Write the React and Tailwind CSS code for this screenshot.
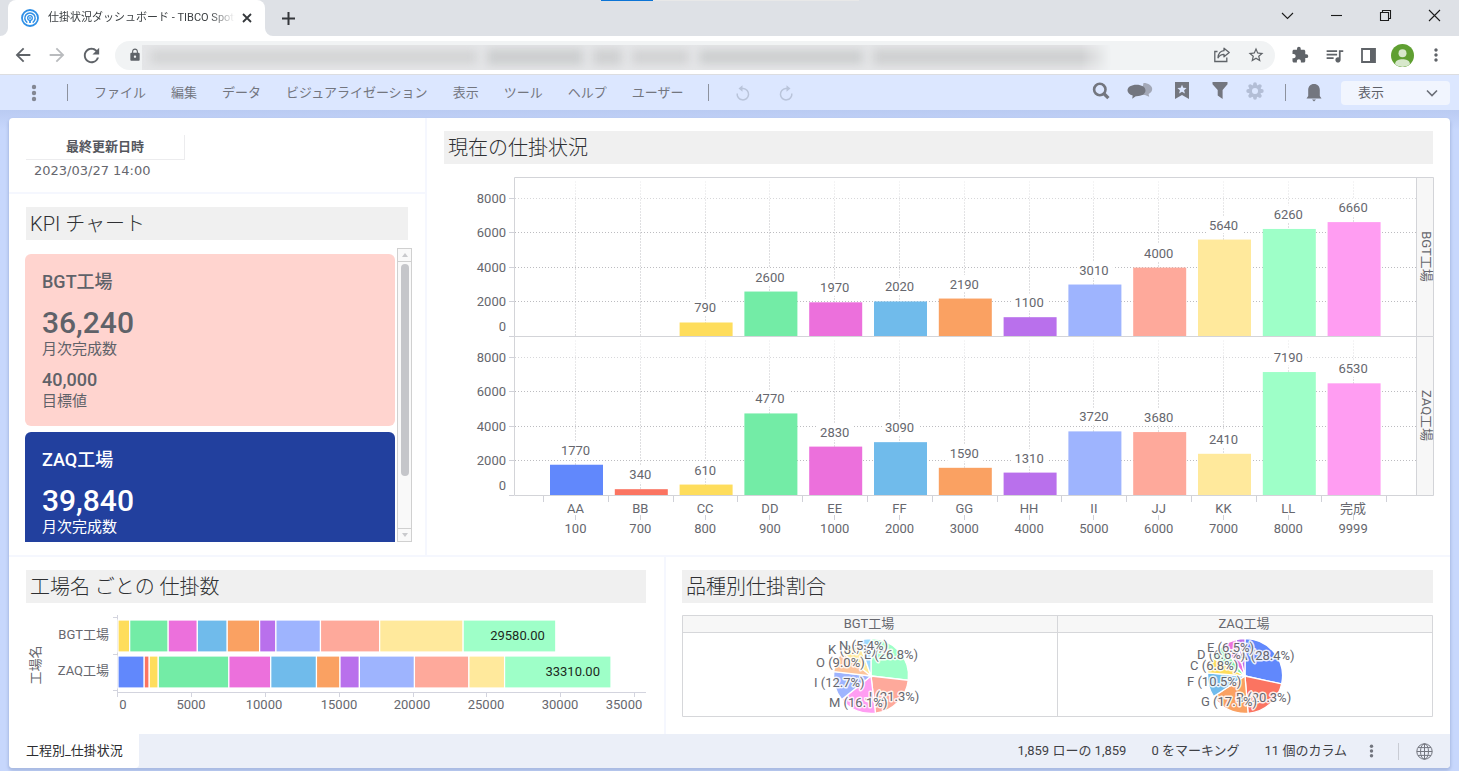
import React from "react";
import {
  MdArrowBack,
  MdArrowForward,
  MdRefresh,
  MdLock,
  MdStarBorder,
  MdExtension,
  MdQueueMusic,
  MdMoreVert,
} from "react-icons/md";

const STEPS = [
  { name: "AA", code: "100", color: "#6188fc", bgt: 0, zaq: 1770 },
  { name: "BB", code: "700", color: "#fb7461", bgt: 0, zaq: 340 },
  { name: "CC", code: "800", color: "#fedd5c", bgt: 790, zaq: 610 },
  { name: "DD", code: "900", color: "#73eca6", bgt: 2600, zaq: 4770 },
  { name: "EE", code: "1000", color: "#ec70dc", bgt: 1970, zaq: 2830 },
  { name: "FF", code: "2000", color: "#70bbeb", bgt: 2020, zaq: 3090 },
  { name: "GG", code: "3000", color: "#faa162", bgt: 2190, zaq: 1590 },
  { name: "HH", code: "4000", color: "#b970ec", bgt: 1100, zaq: 1310 },
  { name: "II", code: "5000", color: "#9eb4fe", bgt: 3010, zaq: 3720 },
  { name: "JJ", code: "6000", color: "#fea99b", bgt: 4000, zaq: 3680 },
  { name: "KK", code: "7000", color: "#ffe99c", bgt: 5640, zaq: 2410 },
  { name: "LL", code: "8000", color: "#9effc8", bgt: 6260, zaq: 7190 },
  { name: "完成", code: "9999", color: "#ff9df2", bgt: 6660, zaq: 6530 },
];

const MENUS = ["ファイル", "編集", "データ", "ビジュアライゼーション", "表示", "ツール", "ヘルプ", "ユーザー"];

function TabStrip() {
  return (
    <header className="relative flex h-9 items-stretch bg-[#dee1e6] pl-2">
      <div className="absolute top-0 left-[601px] flex h-px w-[258px]">
        <div className="w-[52px] bg-[#0b74d6]" />
        <div className="flex-1 bg-[#e8e8e8]" />
      </div>
      <div className="relative flex w-[257px] items-center rounded-t-lg bg-white pr-2 pl-[13px]">
        <svg className="absolute bottom-0 -left-2 size-2" viewBox="0 0 8 8" aria-hidden="true">
          <path d="M8 0v8H0A8 8 0 0 0 8 0Z" fill="#fff" />
        </svg>
        <svg className="absolute -right-2 bottom-0 size-2" viewBox="0 0 8 8" aria-hidden="true">
          <path d="M0 0v8h8A8 8 0 0 1 0 0Z" fill="#fff" />
        </svg>
        <svg className="size-[18px] shrink-0" viewBox="0 0 18 18" fill="none" stroke="#2e8fe6" aria-hidden="true">
          <circle cx="9" cy="9" r="8" strokeWidth="1.8" />
          <path d="M6.3 13.6a5.2 5.2 0 1 1 5.4 0" strokeWidth="1.5" />
          <circle cx="9" cy="9" r="2.300" strokeWidth="1.3" />
          <path d="M9 11v3" strokeWidth="1.8" />
          <circle cx="9" cy="9" r="0.900" fill="#2e8fe6" stroke="none" />
        </svg>
        <div className="ml-[9px] w-[187px] overflow-hidden text-[11px] whitespace-nowrap text-[#3c4043] [mask-image:linear-gradient(to_right,#000_162px,transparent)]">
          仕掛状況ダッシュボード - TIBCO Spotfire
        </div>
        <button type="button" aria-label="タブを閉じる" className="ml-1 flex size-4 items-center justify-center">
          <svg className="size-[10px]" viewBox="0 0 10 10" stroke="#34373b" strokeWidth="1.8" aria-hidden="true">
            <path d="M1 1l8 8M9 1l-8 8" />
          </svg>
        </button>
      </div>
      <button type="button" aria-label="新しいタブ" className="ml-3.5 flex w-[18px] items-center justify-center">
        <svg className="size-[13px]" viewBox="0 0 13 13" stroke="#34373b" strokeWidth="2" aria-hidden="true">
          <path d="M6.5 0v13M0 6.5h13" />
        </svg>
      </button>
      <div className="ml-auto flex h-[30px]">
        {[
          ["タブを検索", "M2 5l5.500 5.500L13 5"],
          ["最小化", "M2 7.5h11"],
          ["元に戻す", "M2.500 4.500h8v8h-8zM4.500 4.500v-2h8v8h-2"],
          ["閉じる", "M2 2l11 11M13 2L2 13"],
        ].map(([label, d]) => (
          <button key={label} type="button" aria-label={label} className="flex w-[49px] items-center justify-center">
            <svg className="size-[15px]" viewBox="0 0 15 15" fill="none" stroke="#1b1b1b" strokeWidth="1.1" aria-hidden="true">
              <path d={d} />
            </svg>
          </button>
        ))}
      </div>
    </header>
  );
}

function AddressBar() {
  return (
    <div className="flex h-[39px] items-center border-b border-[#dcdde0] bg-white pr-1.5 pl-3 text-[#5f6368]">
      <button type="button" aria-label="戻る" className="w-[34px]">
        <MdArrowBack className="size-[22px]" />
      </button>
      <button type="button" aria-label="進む" className="w-[34px] text-[#b9bbbe]">
        <MdArrowForward className="size-[22px]" />
      </button>
      <button type="button" aria-label="再読み込み" className="w-[35px]">
        <MdRefresh className="size-[23px]" />
      </button>
      <div className="flex h-[29px] flex-1 items-center rounded-full bg-[#f1f3f4] pr-2.5 pl-[13px]">
        <MdLock className="size-[14px] shrink-0" />
        <div className="relative mt-1 h-[25px] min-w-0 flex-1 overflow-hidden bg-[#e5e6e8] [mask-image:linear-gradient(to_right,#000_97%,transparent)]">
          <div className="flex size-full items-center gap-2.5 pl-2 blur-[5px]" aria-hidden="true">
            <div className="h-3.5 w-[34%] bg-[#d3d4d5]" />
            <div className="h-4 w-[10%] bg-[#cccecf]" />
            <div className="h-4 w-[3%] bg-[#cfd0d1]" />
            <div className="h-3.5 w-[6%] bg-[#d1d2d3]" />
            <div className="h-3.5 w-[17%] bg-[#cccecf]" />
            <div className="h-4 flex-1 bg-[#cfd0d1]" />
          </div>
          <input
            type="text"
            aria-label="アドレス"
            className="absolute inset-0 size-full bg-transparent px-1 text-[13px] outline-none"
          />
        </div>
        <button type="button" aria-label="共有" className="ml-[102px] flex w-[18px] justify-center">
          <svg className="size-4" viewBox="0 0 16 16" fill="none" stroke="#5f6368" strokeWidth="1.3" aria-hidden="true">
            <path d="M3.500 4.500H.8v10h12v-4" />
            <path d="M10 1.200l5.200 4.300L10 9.800V7.300C7.500 7.300 5.500 8.300 4 10.800 4.300 7 6.500 4 10 3.700Z" strokeLinejoin="round" />
          </svg>
        </button>
        <button type="button" aria-label="ブックマークに追加" className="ml-4 w-[18px]">
          <MdStarBorder className="size-[18px]" />
        </button>
      </div>
      <div className="ml-2 flex items-center">
        <button type="button" aria-label="拡張機能" className="flex w-[34px] justify-center">
          <MdExtension className="size-[18px]" />
        </button>
        <button type="button" aria-label="メディア" className="flex w-[34px] justify-center">
          <MdQueueMusic className="size-[21px]" />
        </button>
        <button type="button" aria-label="サイドパネル" className="flex w-[34px] justify-center">
          <svg className="size-[15px]" viewBox="0 0 15 15" aria-hidden="true">
            <path d="M1 1h13v13H1z" fill="none" stroke="#5f6368" strokeWidth="1.8" />
            <path d="M9 1h5v13H9z" fill="#5f6368" />
          </svg>
        </button>
        <button type="button" aria-label="プロフィール" className="flex w-[34px] justify-center">
          <svg className="size-[23px]" viewBox="0 0 23 23" aria-hidden="true">
            <circle cx="11.500" cy="11.500" r="11.500" fill="#5f9f31" />
            <circle cx="11.500" cy="9.300" r="4" fill="#d7e8cb" />
            <path d="M4 20.200C4.500 16 8 15.300 11.500 15.300S18.500 16 19 20.200A11.500 11.500 0 0 1 4 20.200Z" fill="#d7e8cb" />
          </svg>
        </button>
        <button type="button" aria-label="設定" className="flex w-[34px] justify-center">
          <MdMoreVert className="size-5" />
        </button>
      </div>
    </div>
  );
}

function Dots({ className }) {
  return (
    <svg className={className} viewBox="0 0 6 18" fill="currentColor" aria-hidden="true">
      <circle cx="3" cy="3" r="2.200" />
      <circle cx="3" cy="9" r="2.200" />
      <circle cx="3" cy="15" r="2.200" />
    </svg>
  );
}

function MenuBar() {
  return (
    <nav className="flex h-[35px] items-center bg-[#dce7ff] pr-[9px] pl-[31px] text-[13px] text-[#73767f]">
      <button type="button" aria-label="メニュー">
        <Dots className="h-[18px] w-1.5 text-[#838793]" />
      </button>
      <div className="ml-[30px] h-[17px] w-px bg-[#8d929e]" />
      <div className="ml-[26px] flex gap-[25px]">
        {MENUS.map((m) => (
          <button key={m} type="button" className="whitespace-nowrap">
            {m}
          </button>
        ))}
      </div>
      <div className="ml-[25px] h-[17px] w-px bg-[#8d929e]" />
      <button type="button" aria-label="元に戻す" disabled className="ml-[26px]">
        <svg className="size-4" viewBox="0 0 16 16" fill="none" stroke="#b9c4da" strokeWidth="1.500" aria-hidden="true">
          <path d="M7 3.500h1.200a5.700 5.700 0 1 1-6 5" />
          <path d="M7.500.300v6.400L3.500 3.500Z" fill="#b9c4da" stroke="none" />
        </svg>
      </button>
      <button type="button" aria-label="やり直し" disabled className="ml-[27px]">
        <svg className="size-4" viewBox="0 0 16 16" fill="none" stroke="#b9c4da" strokeWidth="1.500" aria-hidden="true">
          <path d="M9 3.500H7.800a5.700 5.700 0 1 0 6 5" />
          <path d="M8.500.300v6.400l4-3.200Z" fill="#b9c4da" stroke="none" />
        </svg>
      </button>
      <div className="ml-auto flex items-center">
        <div className="flex items-center pb-1">
          <button type="button" aria-label="検索">
            <svg className="size-[18px]" viewBox="0 0 18 18" fill="none" stroke="#73767f" aria-hidden="true">
              <circle cx="7.800" cy="7.500" r="5.700" strokeWidth="2.600" />
              <path d="M11.800 11.500l4.600 4.600" strokeWidth="3.200" />
            </svg>
          </button>
          <button type="button" aria-label="コメント" className="ml-[17px]">
            <svg className="h-[18px] w-[26px]" viewBox="0 0 26 18" aria-hidden="true">
              <path d="M16.500 1c4.800 0 8.700 2.600 8.700 6.100 0 2.200-1.500 3.900-3.600 5l.600 2.700-4.200-1.900h-4Z" fill="#a3a8b7" />
              <path
                d="M9.500 2.800c5 0 9 2.200 9 5.700s-4 5.700-9 5.700h-.700l-3.600 2.500.500-3.100C2.600 12.600.500 10.800.500 8.500c0-3.500 4-5.700 9-5.700Z"
                fill="#73767f"
              />
            </svg>
          </button>
          <button type="button" aria-label="ブックマーク" className="ml-[21px]">
            <svg className="h-[18px] w-4" viewBox="0 0 16 18" aria-hidden="true">
              <path d="M1 0h14v17l-7-4-7 4Z" fill="#73767f" />
              <path d="M8 2.700l1.300 3.100 3.300.300-2.500 2.200.800 3.300L8 9.800l-2.900 1.800.800-3.300L3.400 6.100l3.300-.300Z" fill="#dce7ff" />
            </svg>
          </button>
          <button type="button" aria-label="フィルター" className="ml-[22px]">
            <svg className="h-[18px] w-4" viewBox="0 0 16 18" aria-hidden="true">
              <path d="M.5 0h15v2.300L10.600 8v9L5.700 13.500V8L.5 2.300Z" fill="#73767f" />
            </svg>
          </button>
          <button type="button" aria-label="設定" className="ml-[18px]">
            <svg className="size-[18px]" viewBox="-9 -9 18 18" aria-hidden="true">
              <g stroke="#b3bed6" strokeWidth="3.800" strokeLinecap="round">
                <path d="M0-6.800V-4M0 6.800V4M-6.800 0H-4M6.800 0H4M-4.800-4.800L-3-3M4.800 4.800L3 3M-4.800 4.800L-3 3M4.800-4.800L3-3" />
              </g>
              <circle r="4.600" fill="none" stroke="#b3bed6" strokeWidth="3.400" />
              <circle r="3" fill="#dce7ff" />
            </svg>
          </button>
        </div>
        <div className="ml-[21px] h-[17px] w-px bg-[#8d929e]" />
        <button type="button" aria-label="通知" className="ml-5">
          <svg className="h-[18px] w-4" viewBox="0 0 16 18" fill="#73767f" aria-hidden="true">
            <path d="M8 0c3.600 0 5.800 2.600 5.800 6v6l1.700 2.600H.500L2.200 12V6C2.200 2.600 4.400 0 8 0ZM6 15.600h4L8 17.500Z" />
          </svg>
        </button>
        <div className="relative ml-[19px] h-6 w-[109px]">
          <select
            aria-label="表示モード"
            className="size-full appearance-none rounded bg-[#f1f5fe] pl-[17px] text-[13px] text-[#5d6068]"
          >
            <option>表示</option>
          </select>
          <svg
            className="pointer-events-none absolute top-2 right-3 h-2 w-3"
            viewBox="0 0 12 8"
            fill="none"
            stroke="#6b6e77"
            strokeWidth="1.600"
            aria-hidden="true"
          >
            <path d="M1 1.500l5 5 5-5" />
          </svg>
        </div>
      </div>
    </nav>
  );
}

function PanelTitle({ children }) {
  return (
    <h2 className="h-[33px] bg-[#f0f0f0] pl-1 text-[20px] leading-[35px] font-light whitespace-nowrap text-[#2f3033]">
      {children}
    </h2>
  );
}

function Kpi({ name, value, target, className }) {
  return (
    <article className={`rounded-md px-[17px] py-4 text-[15px] leading-[18px] ${className}`}>
      <h3 className="text-[18px] leading-6 font-medium">{name}</h3>
      <p className="mt-3 text-[30px] leading-[34px] font-medium">{value}</p>
      <p>月次完成数</p>
      <p className="mt-2.5 text-[18px] leading-6 font-medium">{target}</p>
      <p>目標値</p>
    </article>
  );
}

function ScrollArrow({ d }) {
  return (
    <div className="flex h-3.5 items-center justify-center border border-[#d0d0d0] bg-[#f9f9f9]">
      <svg className="h-1 w-1.5" viewBox="0 0 6 4" fill="#c9cacd" aria-hidden="true">
        <path d={d} />
      </svg>
    </div>
  );
}

function KpiPanel() {
  return (
    <section className="flex-1 pt-[13px] pb-[13px]">
      <div className="px-[17px]">
        <PanelTitle>KPI チャート</PanelTitle>
      </div>
      <div className="mt-2 mr-[13px] ml-4 flex h-[294px] gap-0.5">
        <div className="flex flex-1 flex-col gap-1.5 overflow-hidden pt-1.5">
          <Kpi name="BGT工場" value="36,240" target="40,000" className="bg-[#ffd4cf] text-[#5f6269]" />
          <Kpi name="ZAQ工場" value="39,840" target="40,000" className="bg-[#22409e] text-white" />
        </div>
        <div className="flex w-[15px] flex-col">
          <ScrollArrow d="M0 4h6L3 0Z" />
          <div className="flex flex-1 justify-center border-x border-[#d0d0d0] bg-[#f9f9f9] pt-0.5">
            <div className="h-[212px] w-2 rounded-full bg-[#c5c6ca]" />
          </div>
          <ScrollArrow d="M0 0h6L3 4Z" />
        </div>
      </div>
    </section>
  );
}

const UNIT = 34.2 / 2000;
const stepX = (i) => 132.500 + i * 64.8;

function Facet({ title, field, base }) {
  const top = base - 159;
  return (
    <g>
      <g stroke="#bcbcc0" strokeDasharray="1 2">
        {[2000, 4000, 6000, 8000].map((v) => (
          <path key={v} d={`M71 ${Math.floor(base - v * UNIT) - 0.5}H972`} />
        ))}
        {STEPS.map((s, i) => (
          <path key={s.name} d={`M${Math.floor(stepX(i)) - 0.5} ${top + 4}V${base}`} />
        ))}
      </g>
      <rect x="71" y={top + 1} width="901" height="44" fill="url(#fade)" />
      {STEPS.map((s, i) => {
        const v = s[field];
        if (!v) return null;
        const h = v * UNIT;
        const w = String(v).length * 8 + 4;
        return (
          <g key={s.name}>
            <rect x={stepX(i) - w / 2} y={base - h - 24} width={w} height="17" fill="#fff" />
            <rect x={stepX(i) - 26.500} y={base - h - 0.500} width="53" height={h} fill={s.color} />
            <text x={stepX(i) - 1} y={base - h - 10.500} textAnchor="middle">
              {v}
            </text>
          </g>
        );
      })}
      {[0, 2000, 4000, 6000, 8000].map((v) => (
        <g key={v}>
          <path d={v ? `M65 ${Math.floor(base - v * UNIT) - 0.5}h5` : `M65 ${base}h5`} stroke="#d0d1d8" />
          <text x="62" y={v ? base - v * UNIT + 3.500 : base - 6} textAnchor="end">
            {v}
          </text>
        </g>
      ))}
      <rect x="973" y={top} width="17" height="159" fill="#f7f7f7" />
      <path d={`M70.500 ${top}H989.500V${base}H70.500ZM972.500 ${top}V${base}`} fill="none" stroke="#d3d4d8" />
      <text transform={`translate(978 ${top + 79}) rotate(90)`} textAnchor="middle">
        {title}
      </text>
    </g>
  );
}

function StepChart() {
  return (
    <section className="px-[17px] pt-[13px] pb-[13px]">
      <PanelTitle>現在の仕掛状況</PanelTitle>
      <svg
        className="mt-[9px] block w-full overflow-visible text-[13px]"
        viewBox="0 0 989 369"
        fill="#66676e"
        role="img"
        aria-label="現在の仕掛状況"
      >
        <defs>
          <linearGradient id="fade" x1="0" y1="0" x2="0" y2="1">
            <stop offset="0" stopColor="#fff" stopOpacity="0.75" />
            <stop offset="1" stopColor="#fff" stopOpacity="0" />
          </linearGradient>
        </defs>
        <Facet title="BGT工場" field="bgt" base={163.500} />
        <Facet title="ZAQ工場" field="zaq" base={322.500} />
        {STEPS.map((s, i) => (
          <g key={s.name}>
            <path d={`M${Math.floor(stepX(i) - 32) - 0.5} 323v6M${Math.floor(stepX(i)) - 0.5} 342v5`} stroke="#d0d1d8" />
            <text x={stepX(i) - 1} y="340" textAnchor="middle">
              {s.name}
            </text>
            <text x={stepX(i) - 1} y="360" textAnchor="middle">
              {s.code}
            </text>
          </g>
        ))}
        <path d="M942.500 323v6" stroke="#d0d1d8" />
      </svg>
    </section>
  );
}

function StackRow({ label, field, y, total }) {
  let sum = 0;
  const scale = 0.0148;
  return (
    <g>
      {STEPS.slice(0, 12).map((s) => {
        const start = sum;
        sum += s[field];
        return s[field] ? (
          <rect
            key={s.name}
            x={92 + start * scale}
            y={y}
            width={s[field] * scale}
            height="32"
            fill={s.color}
            stroke="#fff"
            strokeWidth="1.200"
          />
        ) : null;
      })}
      <text x="83" y={y + 19} textAnchor="end">
        {label}
      </text>
      <text x={91 + sum * scale - 10} y={y + 20} textAnchor="end" fill="#1d2a22">
        {total}
      </text>
    </g>
  );
}

function StackChart() {
  const labelX = [97, 165, 238, 313, 386, 460, 534, 598];
  return (
    <section className="border-r-2 border-[#f5f7fe] pt-[13px] pr-[18px] pb-[13px] pl-[17px]">
      <PanelTitle>工場名 ごとの 仕掛数</PanelTitle>
      <svg
        className="mt-2 block w-full overflow-visible text-[13px]"
        viewBox="0 0 620 110"
        fill="#66676e"
        role="img"
        aria-label="工場名 ごとの 仕掛数"
      >
        <path d="M87 6.500h4M87 43.500h4M87 79.500h4M91.500 4v82M91 81.500h529" stroke="#d3d4de" fill="none" />
        {labelX.map((x, i) => (
          <g key={x}>
            <path d={`M${Math.floor(91.800 + i * 73.800) + 0.5} 82v4`} stroke="#d3d4de" />
            <text x={x} y="98" textAnchor="middle">
              {i * 5000}
            </text>
          </g>
        ))}
        <StackRow label="BGT工場" field="bgt" y={9} total="29580.00" />
        <StackRow label="ZAQ工場" field="zaq" y={45} total="33310.00" />
        <text transform="translate(14 54) rotate(-90)" textAnchor="middle">
          工場名
        </text>
      </svg>
    </section>
  );
}

const BGT_PIE = [
  { label: "L (26.8%)", share: 26.8, color: "#9effc8", x: 182, y: 48 },
  { label: "J (21.3%)", share: 21.3, color: "#fea99b", x: 183, y: 90 },
  { label: "M (16.1%)", share: 16.1, color: "#ff9df2", x: 147, y: 96 },
  { label: "I (12.7%)", share: 12.7, color: "#9eb4fe", x: 132, y: 76 },
  { label: "O (9.0%)", share: 9.0, color: "#fdc49b", x: 134, y: 56 },
  { label: "K (8.7%)", share: 8.7, color: "#ffe99c", x: 146, y: 43 },
  { label: "N (5.4%)", share: 5.4, color: "#9bd8ff", x: 157, y: 39 },
];

const ZAQ_PIE = [
  { label: "A (28.4%)", share: 28.4, color: "#6188fc", x: 557, y: 49 },
  { label: "B (20.3%)", share: 20.3, color: "#fb7461", x: 554, y: 91 },
  { label: "G (17.1%)", share: 17.1, color: "#faa162", x: 519, y: 95 },
  { label: "F (10.5%)", share: 10.5, color: "#70bbeb", x: 505, y: 75 },
  { label: "C (6.8%)", share: 6.8, color: "#fedd5c", x: 508, y: 59 },
  { label: "D (6.6%)", share: 6.6, color: "#73eca6", x: 515, y: 48 },
  { label: "E (6.5%)", share: 6.5, color: "#ec70dc", x: 525, y: 41 },
  { label: "", share: 3.8, color: "#b970ec", x: 0, y: 0 },
];

function Pie({ slices, cx, cy }) {
  const r = 37.500;
  const point = (p) => {
    const a = (p / 100) * 2 * Math.PI;
    return `${(cx + r * Math.sin(a)).toFixed(2)} ${(cy - r * Math.cos(a)).toFixed(2)}`;
  };
  let at = 0;
  return (
    <g>
      {slices.map((s) => {
        const from = at;
        at += s.share;
        return (
          <path
            key={s.color}
            d={`M${cx} ${cy}L${point(from)}A${r} ${r} 0 0 1 ${point(at)}Z`}
            fill={s.color}
            stroke="#fff"
            strokeWidth="1.300"
          />
        );
      })}
      {slices
        .filter((s) => s.label)
        .map((s) => (
          <text key={s.label} x={s.x} y={s.y} stroke="#fff" strokeOpacity="0.85" strokeWidth="3" paintOrder="stroke" strokeLinejoin="round">
            {s.label}
          </text>
        ))}
    </g>
  );
}

function PieChart() {
  return (
    <section className="pt-[13px] pr-[17px] pb-[13px] pl-4">
      <PanelTitle>品種別仕掛割合</PanelTitle>
      <svg
        className="mt-2 block w-full overflow-visible text-[13px]"
        viewBox="0 0 751 110"
        fill="#66676e"
        role="img"
        aria-label="品種別仕掛割合"
      >
        <rect x="0.500" y="4.500" width="750" height="17" fill="#f7f7f7" />
        <path d="M.5 4.500h750v101H.5ZM.5 21.500h750M375.500 4.500v101" fill="none" stroke="#d6d7da" />
        <text x="187" y="17" textAnchor="middle">
          BGT工場
        </text>
        <text x="562" y="17" textAnchor="middle">
          ZAQ工場
        </text>
        <Pie slices={BGT_PIE} cx={189} cy={65} />
        <Pie slices={ZAQ_PIE} cx={563} cy={65} />
      </svg>
    </section>
  );
}

function StatusBar() {
  return (
    <footer className="flex h-[34px] items-center overflow-hidden rounded-b bg-[#ebeff8] pr-[17px] text-[13px] text-[#3f4146]">
      <button type="button" className="h-full w-[130px] rounded-b bg-white pl-[17px] text-left whitespace-nowrap text-[#2b2c2f]">
        工程別_仕掛状況
      </button>
      <div className="ml-auto flex items-center gap-[25px]">
        <span>1,859 ローの 1,859</span>
        <span>0 をマーキング</span>
        <span>11 個のカラム</span>
      </div>
      <button type="button" aria-label="その他" className="ml-[22px]">
        <Dots className="h-3.5 w-[5px] text-[#73767f]" />
      </button>
      <div className="ml-6 h-[17px] w-px bg-[#c9ccd4]" />
      <button type="button" aria-label="言語" className="ml-[17px]">
        <svg className="size-[17px]" viewBox="0 0 17 17" fill="none" stroke="#73767f" strokeWidth="1" aria-hidden="true">
          <circle cx="8.500" cy="8.500" r="7.700" />
          <ellipse cx="8.500" cy="8.500" rx="4" ry="7.700" />
          <path d="M8.500.8v15.400M.8 8.500h15.400M2 4.600h13M2 12.400h13" />
        </svg>
      </button>
    </footer>
  );
}

export default function App() {
  return (
    <div className="flex min-h-screen flex-col bg-[#c7d7fc] font-['Roboto','Noto_Sans_CJK_JP',sans-serif]" lang="ja">
      <TabStrip />
      <AddressBar />
      <MenuBar />
      <div className="flex-1 bg-linear-to-b from-[#bacbf2] to-[#c7d7fc] to-[20px] px-[9px] pt-2 pb-[3px]">
        <main className="rounded bg-white shadow-[0_2px_3px_1px_#a9bae2]">
          <div className="grid grid-cols-[418fr_1023fr]">
            <div className="flex flex-col border-r-2 border-[#f5f7fe]">
              <section className="border-b-2 border-[#f5f7fe] px-[17px] pt-[17px] pb-[9px]">
                <table className="w-[159px] text-[13px] text-[#66676e]">
                  <thead>
                    <tr>
                      <th className="h-6 border-r border-b border-[#ececee] p-0 font-bold text-[#55575e]">最終更新日時</th>
                    </tr>
                  </thead>
                  <tbody>
                    <tr>
                      <td className="h-6 p-0 pl-2 font-['DejaVu_Sans',sans-serif] leading-4 whitespace-nowrap">2023/03/27 14:00</td>
                    </tr>
                  </tbody>
                </table>
              </section>
              <KpiPanel />
            </div>
            <StepChart />
          </div>
          <div className="grid grid-cols-[657fr_784fr] border-t-2 border-[#f5f7fe]">
            <StackChart />
            <PieChart />
          </div>
          <StatusBar />
        </main>
      </div>
    </div>
  );
}
